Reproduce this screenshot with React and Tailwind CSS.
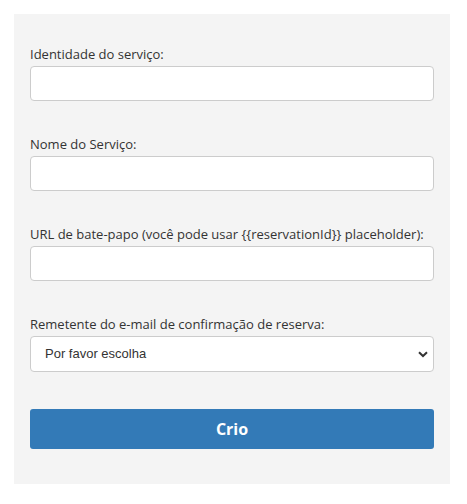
import React from "react";

function Field({ label, children }) {
  return (
    <div className="flex flex-col">
      <label className="text-[13px] leading-[18px] text-[#333] mb-[3px]">{label}</label>
      {children}
    </div>
  );
}

export default function App() {
  return (
    <div className="w-[467px] h-[504px] bg-white pt-[14px] pl-[14px]" style={{ fontFamily: '"Open Sans", sans-serif' }}>
      <div className="w-[436px] h-[470px] bg-[#f4f4f4] px-4 pt-[31px] flex flex-col gap-[34px]">
        <Field label="Identidade do serviço:">
          <input className="h-[35px] w-full bg-white border border-[#ccc] rounded-[4px] px-3 outline-none" />
        </Field>
        <Field label="Nome do Serviço:">
          <input className="h-[35px] w-full bg-white border border-[#ccc] rounded-[4px] px-3 outline-none" />
        </Field>
        <Field label="URL de bate-papo (você pode usar {{reservationId}} placeholder):">
          <input className="h-[35px] w-full bg-white border border-[#ccc] rounded-[4px] px-3 outline-none" />
        </Field>
        <Field label="Remetente do e-mail de confirmação de reserva:">
          <div className="relative">
            <select
              className="appearance-none h-[36px] w-full bg-white border border-[#ccc] rounded-[4px] pl-[14px] pr-8 text-[13px] text-[#333] outline-none"
              style={{ fontFamily: '"Liberation Sans", Arial, sans-serif' }}
              defaultValue=""
            >
              <option value="">Por favor escolha</option>
            </select>
            <svg className="absolute right-[6px] top-[15px] pointer-events-none" width="10" height="7" viewBox="0 0 10 7">
              <path d="M1 1.2 L5 5 L9 1.2" fill="none" stroke="#333" strokeWidth="2" />
            </svg>
          </div>
        </Field>
        <button className="mt-[3px] h-[40px] w-full bg-[#337ab7] rounded-[3px] text-white font-bold text-[16px]">
          Crio
        </button>
      </div>
    </div>
  );
}
